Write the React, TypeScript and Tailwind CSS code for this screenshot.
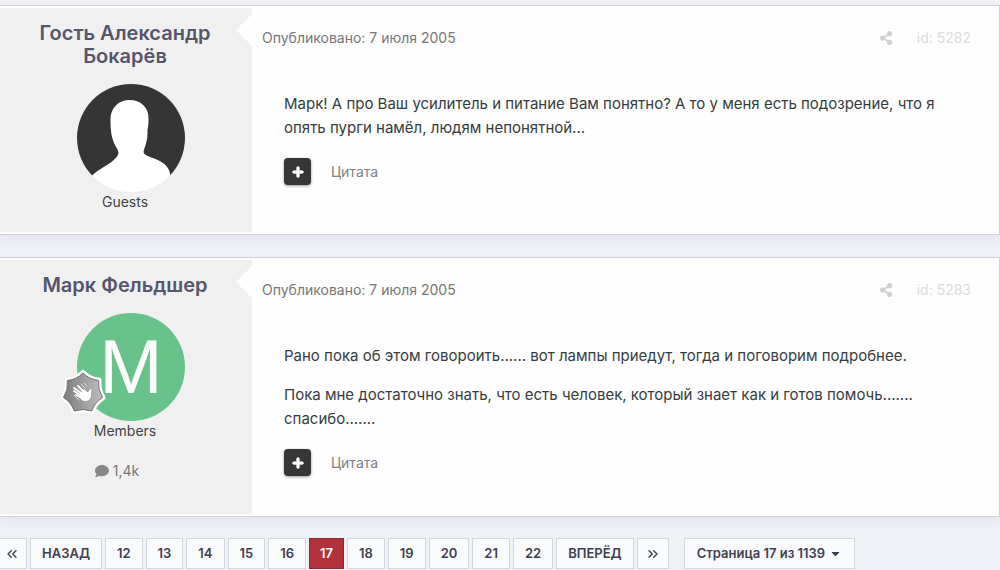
import type { ReactNode } from "react";
import { ChevronsLeft, ChevronsRight } from "lucide-react";
import { FaCaretDown, FaComment, FaPlus, FaShareAlt } from "react-icons/fa";

const GuestAvatar = () => (
  <svg viewBox="0 0 108 108" className="block size-27 rounded-full bg-white">
    <path
      fill="#353535"
      d="M0 0h108v92H93.500c-1-7-4-11-9-14-6-4-14-5-17-8-2-2 0-5 1-9 2-6 2-10 2-15 1-5 1-8 1-12 0-11-8-18-19-18s-19 8-19 19c0 12 1 18 4 25 2 4 4 6 4 9 0 2-3 6-7 9-7 5-14 8-20 14H0z"
    />
  </svg>
);

const RankBadge = () => (
  <svg
    viewBox="0 0 48 48"
    className="absolute bottom-1 -left-4.5 size-12"
    role="img"
    aria-label="Newbie"
  >
    <defs>
      <linearGradient id="rank" x1="0" y1="0" x2="1" y2="0">
        <stop offset="0" stopColor="#7c7c7c" />
        <stop offset="1" stopColor="#bdbdbd" />
      </linearGradient>
      <path
        id="star"
        strokeLinejoin="round"
        d="M24 4Q30.500 10.500 39.600 11.500Q38.600 20.700 43.500 28.500Q35.700 33.400 32.700 42Q24 39 15.300 42Q12.300 33.400 4.500 28.500Q9.400 20.700 8.400 11.500Q17.500 10.500 24 4z"
      />
    </defs>
    <use href="#star" fill="#fff" stroke="#fff" strokeWidth="6" />
    <use href="#star" fill="url(#rank)" stroke="#707070" strokeWidth="1" />
    <g fill="none" stroke="#fff" strokeLinecap="round">
      <path d="M24 22l-5-5M22 24l-7-5M21 26l-6-4M21 28l-4-2" strokeWidth="1.800" />
      <path d="M22 15l4 4M25 14l3 3M15 26l5 5" strokeWidth="1" opacity=".7" />
    </g>
    <path
      fill="#fff"
      d="M20 25l5-5 3 3c2 1 2-3 4-3 1 0 0 3 0 6 0 4-3 6-6 6s-4-2-6-4z"
    />
  </svg>
);

const MemberAvatar = () => (
  <div className="relative flex size-27 items-center justify-center rounded-full bg-[#68c38a]">
    <span className="font-['Liberation_Sans',sans-serif] text-[76px] leading-none text-white">
      M
    </span>
    <RankBadge />
  </div>
);

type PostProps = {
  id: number;
  author: string;
  group: string;
  avatar: ReactNode;
  posts?: string;
  children: ReactNode;
};

const Post = ({ id, author, group, avatar, posts, children }: PostProps) => (
  <article className="flex border border-l-0 border-[#d2d2d8] bg-[#fefefe] py-0.5 shadow-[0_4px_10px_rgba(60,60,110,0.07)]">
    <aside className="relative flex w-[252px] shrink-0 flex-col items-center bg-[#f0f0f0] pr-0.5 pt-3.5 pb-5">
      <h3 className="px-8 text-center text-xl leading-[23px] font-semibold text-[#55556d]">
        {author}
      </h3>
      <div className="mt-4 pl-3">{avatar}</div>
      <p className="text-sm leading-5 text-[#444]">{group}</p>
      {posts && (
        <p className="mt-5 mr-4 flex items-center gap-1 pb-[13px] text-sm leading-5 text-[#777]">
          <FaComment className="text-[#888]" />
          {posts}
        </p>
      )}
      <svg viewBox="0 0 16 32" className="absolute top-1.5 right-0 h-8 w-4">
        <path d="M16 0v32L0 16z" fill="#fefefe" />
      </svg>
    </aside>

    <div className="min-w-0 flex-1 pt-5">
      <header className="flex items-center pr-7 pl-2.5 text-sm leading-5 text-[#777]">
        <a href="#">Опубликовано: 7 июля 2005</a>
        <a href="#" aria-label="Поделиться" className="ml-auto text-[#d0d0d0]">
          <FaShareAlt />
        </a>
        <a href="#" className="ml-6 text-[#dcdcdc]">
          id: {id}
        </a>
      </header>
      <div className="mt-11 flex flex-col gap-[15px] px-8 text-[15px] leading-6 text-[#353c41]">
        {children}
      </div>
      <div className="mt-[18px] flex items-center gap-5 px-8 pb-5">
        <button
          aria-label="Мультицитата"
          className="flex size-[27px] items-center justify-center rounded bg-[#363636] text-white shadow-[0_1px_3px_rgba(0,0,0,0.4)]"
        >
          <FaPlus className="size-3" stroke="currentColor" strokeWidth="40" />
        </button>
        <button className="text-sm leading-5 text-[#808080]">Цитата</button>
      </div>
    </div>
  </article>
);

const PageLink = ({ active, children }: { active?: boolean; children: ReactNode }) => (
  <a
    href="#"
    className={
      active
        ? "border border-[#8f2730] bg-[#b2313b] px-2.5 py-1 text-white"
        : "border border-[#d6d8df] bg-[#f9fafc] px-[11px] py-1"
    }
  >
    {children}
  </a>
);

const pages = [12, 13, 14, 15, 16, 17, 18, 19, 20, 21, 22];

export default function App() {
  return (
    <main className="min-h-screen overflow-hidden bg-[#f0f1f7] pt-[5px] font-['Inter','Liberation_Sans',sans-serif]">
      <div className="flex flex-col gap-[22px]">
        <Post
          id={5282}
          author="Гость Александр Бокарёв"
          group="Guests"
          avatar={<GuestAvatar />}
        >
          <p>
            Марк! А про Ваш усилитель и питание Вам понятно? А то у меня есть
            подозрение, что я опять пурги намёл, людям непонятной...
          </p>
        </Post>
        <Post
          id={5283}
          author="Марк Фельдшер"
          group="Members"
          avatar={<MemberAvatar />}
          posts="1,4k"
        >
          <p>
            Рано пока об этом говороить...... вот лампы приедут, тогда и
            поговорим подробнее.
          </p>
          <p>
            Пока мне достаточно знать, что есть человек, который знает как и
            готов помочь....... спасибо.......
          </p>
        </Post>
      </div>

      <nav className="mt-[21px] flex gap-[3px] text-[13px] leading-[21px] font-semibold text-[#3f3f50]">
        <a
          href="#"
          aria-label="Первая"
          className="flex items-center border border-l-0 border-[#d6d8df] bg-[#f9fafc] pr-1.5 pl-1"
        >
          <ChevronsLeft className="size-4" />
        </a>
        <PageLink>НАЗАД</PageLink>
        {pages.map((page) => (
          <PageLink key={page} active={page === 17}>
            {page}
          </PageLink>
        ))}
        <PageLink>ВПЕРЁД</PageLink>
        <a
          href="#"
          aria-label="Последняя"
          className="flex items-center border border-[#d6d8df] bg-[#f9fafc] px-[7px]"
        >
          <ChevronsRight className="size-4" />
        </a>
        <button className="ml-3 flex items-center gap-1 border border-[#d6d8df] bg-[#f9fafc] px-3 font-semibold">
          Страница 17 из 1139
          <FaCaretDown />
        </button>
      </nav>
    </main>
  );
}
